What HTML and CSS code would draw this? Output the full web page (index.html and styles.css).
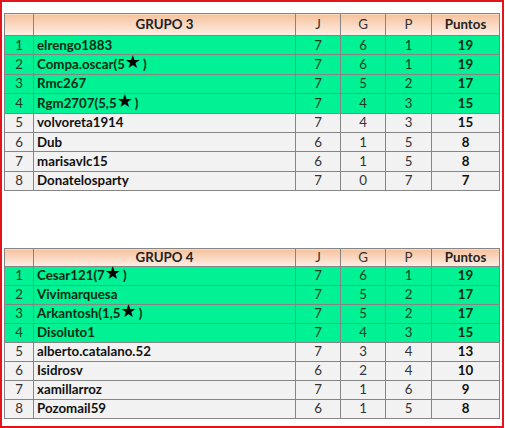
FILE: index.html
```html
<!DOCTYPE html>
<html>
<head>
<meta charset="utf-8">
<link rel="stylesheet" href="styles.css">
</head>
<body>
<div class="frame">
  <table class="grupo g3">
    <colgroup>
      <col class="c-pos"><col class="c-name"><col class="c-j"><col class="c-g"><col class="c-p"><col class="c-pts">
    </colgroup>
    <tr class="head"><th></th><th class="b">GRUPO 3</th><th>J</th><th>G</th><th>P</th><th class="b">Puntos</th></tr>
    <tr class="up"><td>1</td><td class="name">elrengo1883</td><td>7</td><td>6</td><td>1</td><td class="pts">19</td></tr>
    <tr class="up"><td>2</td><td class="name">Compa.oscar(5<span class="star">★</span>)</td><td>7</td><td>6</td><td>1</td><td class="pts">19</td></tr>
    <tr class="up"><td>3</td><td class="name">Rmc267</td><td>7</td><td>5</td><td>2</td><td class="pts">17</td></tr>
    <tr class="up"><td>4</td><td class="name">Rgm2707(5,5<span class="star">★</span>)</td><td>7</td><td>4</td><td>3</td><td class="pts">15</td></tr>
    <tr><td>5</td><td class="name">volvoreta1914</td><td>7</td><td>4</td><td>3</td><td class="pts">15</td></tr>
    <tr><td>6</td><td class="name">Dub</td><td>6</td><td>1</td><td>5</td><td class="pts">8</td></tr>
    <tr><td>7</td><td class="name">marisavlc15</td><td>6</td><td>1</td><td>5</td><td class="pts">8</td></tr>
    <tr><td>8</td><td class="name">Donatelosparty</td><td>7</td><td>0</td><td>7</td><td class="pts">7</td></tr>
  </table>
  <table class="grupo g4">
    <colgroup>
      <col class="c-pos"><col class="c-name"><col class="c-j"><col class="c-g"><col class="c-p"><col class="c-pts">
    </colgroup>
    <tr class="head"><th></th><th class="b">GRUPO 4</th><th>J</th><th>G</th><th>P</th><th class="b">Puntos</th></tr>
    <tr class="up"><td>1</td><td class="name">Cesar121(7<span class="star">★</span>)</td><td>7</td><td>6</td><td>1</td><td class="pts">19</td></tr>
    <tr class="up"><td>2</td><td class="name">Vivimarquesa</td><td>7</td><td>5</td><td>2</td><td class="pts">17</td></tr>
    <tr class="up"><td>3</td><td class="name">Arkantosh(1,5<span class="star">★</span>)</td><td>7</td><td>5</td><td>2</td><td class="pts">17</td></tr>
    <tr class="up"><td>4</td><td class="name">Disoluto1</td><td>7</td><td>4</td><td>3</td><td class="pts">15</td></tr>
    <tr><td>5</td><td class="name">alberto.catalano.52</td><td>7</td><td>3</td><td>4</td><td class="pts">13</td></tr>
    <tr><td>6</td><td class="name">Isidrosv</td><td>6</td><td>2</td><td>4</td><td class="pts">10</td></tr>
    <tr><td>7</td><td class="name">xamillarroz</td><td>7</td><td>1</td><td>6</td><td class="pts">9</td></tr>
    <tr><td>8</td><td class="name">Pozomail59</td><td>6</td><td>1</td><td>5</td><td class="pts">8</td></tr>
  </table>
</div>
</body>
</html>
```

FILE: styles.css
```css
html, body {
  margin: 0;
  padding: 0;
  background: #ffffff;
}
.frame {
  box-sizing: border-box;
  width: 504px;
  height: 428px;
  border: 2px solid #e3141b;
  padding: 11px 0 0 2px;
  font-family: Lato, "Liberation Sans", sans-serif;
  font-size: 13.3px;
  color: #222;
}
.grupo {
  border-collapse: collapse;
  table-layout: fixed;
  width: 495px;
}
.g4 {
  margin-top: 57px;
}
.c-pos { width: 29px; }
.c-name { width: 262px; }
.c-j { width: 45px; }
.c-g { width: 45px; }
.c-p { width: 46px; }
.c-pts { width: 68px; }
.grupo th, .grupo td {
  border: 1px solid #858585;
  padding: 0;
  text-align: center;
  white-space: nowrap;
  line-height: 1;
}
.grupo th {
  font-weight: normal;
  color: #333;
  background: linear-gradient(#f7c29d, #fdefe6);
}
.grupo th.b {
  font-weight: bold;
  color: #222;
}
.g3 tr.head { height: 22px; }
.g3 tr { height: 19.4px; }
.g4 tr.head { height: 18px; }
.g4 tr { height: 19px; }
.grupo tr td { background: #f2f2f2; color: #333; }
.grupo tr.up td { background: #00f295; color: #1e3d22; }
.grupo td.name {
  text-align: left;
  padding-left: 3px;
  font-weight: bold;
  color: #111;
}
.grupo tr.up td.name { color: #0c2a12; }
.grupo td.pts {
  font-weight: bold;
  color: #111;
}
.grupo tr.up td.pts { color: #0c2a12; }
.star {
  font-family: "DejaVu Sans", sans-serif;
  font-size: 18px;
  line-height: 0;
  color: #000;
  margin-right: 2px;
  position: relative;
  top: -1px;
}
```
